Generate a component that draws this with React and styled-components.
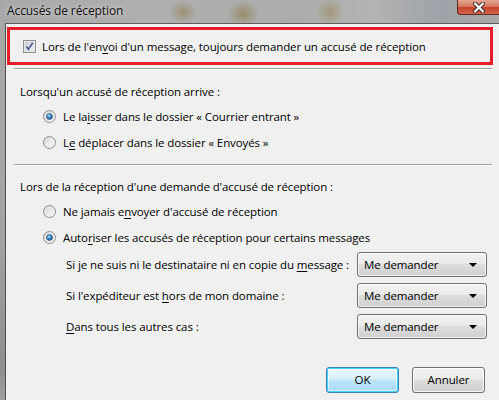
import React from "react";
import styled, { createGlobalStyle } from "styled-components";

const GlobalStyle = createGlobalStyle`
  html, body {
    margin: 0;
    padding: 0;
    background: #a6a6a6;
  }
  body {
    font-family: "Open Sans", "Noto Sans", sans-serif;
    font-size: 11.5px;
    letter-spacing: -0.1px;
    color: #000;
  }
`;

const Window = styled.div`
  width: 499px;
  height: 400px;
  display: flex;
  flex-direction: column;
  overflow: hidden;
  background: linear-gradient(180deg, #a9a9a9 0%, #a2a2a2 60%, #8f8f8f 92%, #a0a0a0 100%);
`;

const TitleBar = styled.div`
  height: 23px;
  flex-shrink: 0;
  display: flex;
  justify-content: space-between;
  align-items: flex-start;
  background:
    radial-gradient(ellipse 14px 12px at 183px 12px, rgba(140, 120, 70, 0.55), transparent),
    radial-gradient(ellipse 16px 14px at 243px 14px, rgba(140, 120, 60, 0.6), transparent),
    radial-gradient(ellipse 14px 14px at 330px 12px, rgba(150, 130, 70, 0.5), transparent),
    linear-gradient(90deg, #a8a8a8 0%, #b0b0b0 30%, #acacac 60%, #b3b3b3 75%, #9ea3a9 88%, #a8a8a8 100%);
`;

const Title = styled.div`
  padding: 2px 0 0 7px;
  line-height: 17px;
  font-size: 12px;
  color: #111;
  text-shadow: 0 0 5px rgba(255, 255, 255, 0.75);
`;

const CloseButton = styled.div`
  width: 42px;
  height: 15px;
  box-sizing: border-box;
  border: 1px solid #5b2a22;
  border-top: none;
  border-right: none;
  border-radius: 0 0 0 4px;
  background: linear-gradient(180deg, #e6a794 0%, #d67a63 45%, #c2412a 55%, #d4674a 100%);
  display: flex;
  align-items: center;
  justify-content: center;
`;

const Client = styled.div`
  flex: 1;
  margin-left: 5px;
  border-left: 1px solid #4e4e4e;
  border-top: 1px solid #5e5e5e;
  background: #f0f0f0;
  display: flex;
  flex-direction: column;
  white-space: nowrap;
`;

const Highlight = styled.div`
  margin: 3px 6px 0 1px;
  height: 38px;
  box-sizing: border-box;
  border: 3px solid #e81d2a;
  padding-left: 13px;
  display: flex;
  align-items: center;
  gap: 6px;
`;

const Separator = styled.div`
  margin: ${(p) => p.$top}px 7px 0 8px;
  height: 1px;
  background: #a0a0a0;
  border-bottom: 1px solid #ffffff;
`;

const Section = styled.div`
  margin-top: ${(p) => p.$top}px;
  display: flex;
  flex-direction: column;
`;

const Label = styled.div`
  height: 24px;
  padding-left: 14px;
  display: flex;
  align-items: center;
`;

const RadioRow = styled.div`
  height: ${(p) => p.$h || 26}px;
  padding-left: 37px;
  display: flex;
  align-items: center;
  gap: 7px;
`;

const Rules = styled.div`
  display: flex;
  flex-direction: column;
  gap: 6px;
  margin-top: 2px;
`;

const RuleRow = styled.div`
  height: 25px;
  padding: 0 12px 0 60px;
  display: flex;
  align-items: center;
  justify-content: space-between;
`;

const Combo = styled.div`
  width: 130px;
  height: 25px;
  box-sizing: border-box;
  border: 1px solid #707070;
  border-radius: 3px;
  background: linear-gradient(180deg, #f2f2f2 0%, #ebebeb 45%, #dddddd 50%, #cfcfcf 100%);
  box-shadow: inset 0 0 0 1px rgba(255, 255, 255, 0.7);
  display: flex;
  align-items: center;
  justify-content: space-between;
  padding: 0 9px 0 6px;
`;

const Arrow = styled.span`
  width: 0;
  height: 0;
  border-left: 4px solid transparent;
  border-right: 4px solid transparent;
  border-top: 4px solid #000;
`;

const Buttons = styled.div`
  margin-top: 28px;
  padding-right: 14px;
  display: flex;
  justify-content: flex-end;
  gap: 13px;
`;

const Button = styled.div`
  width: 73px;
  height: 26px;
  box-sizing: border-box;
  border: 1px solid ${(p) => (p.$default ? "#3c7fb1" : "#707070")};
  border-radius: 3px;
  background: ${(p) =>
    p.$default
      ? "linear-gradient(180deg, #eaf6fd 0%, #d9f0fc 45%, #bee6fd 50%, #a7d9f5 100%)"
      : "linear-gradient(180deg, #f2f2f2 0%, #ebebeb 45%, #dddddd 50%, #cfcfcf 100%)"};
  box-shadow: ${(p) =>
    p.$default ? "inset 0 0 0 1px #48d4fb, inset 0 0 0 2px rgba(255,255,255,0.5)" : "inset 0 0 0 1px rgba(255,255,255,0.8)"};
  display: flex;
  align-items: center;
  justify-content: center;
  padding-bottom: 1px;
`;

const Key = styled.span`
  text-decoration: underline;
  text-underline-offset: 2px;
`;

const Radio = ({ checked }) => (
  <svg width="13" height="13" viewBox="0 0 13 13">
    <defs>
      <linearGradient id="rf" x1="0" y1="0" x2="1" y2="1">
        <stop offset="0" stopColor="#d4d4d4" />
        <stop offset="1" stopColor="#ffffff" />
      </linearGradient>
      <radialGradient id="rd" cx="0.4" cy="0.35" r="0.7">
        <stop offset="0" stopColor="#b8e6fb" />
        <stop offset="0.45" stopColor="#3a8fd0" />
        <stop offset="1" stopColor="#1d4f85" />
      </radialGradient>
    </defs>
    <circle cx="6.5" cy="6.5" r="6" fill="url(#rf)" stroke="#8f8f8f" strokeWidth="1" />
    <circle cx="6.5" cy="6.5" r="4.2" fill="none" stroke="#e9e9e9" strokeWidth="0.8" />
    {checked && <circle cx="6.5" cy="6.5" r="3" fill="url(#rd)" stroke="#264c74" strokeWidth="0.6" />}
  </svg>
);

const Checkbox = () => (
  <svg width="13" height="13" viewBox="0 0 13 13">
    <defs>
      <linearGradient id="cf" x1="0" y1="0" x2="1" y2="1">
        <stop offset="0" stopColor="#cbcfd5" />
        <stop offset="1" stopColor="#f6f6f6" />
      </linearGradient>
    </defs>
    <rect x="0.5" y="0.5" width="12" height="12" fill="#f4f4f4" stroke="#8e8f8f" />
    <rect x="2" y="2" width="9" height="9" fill="url(#cf)" stroke="#c9ccd1" strokeWidth="0.6" />
    <path d="M3.4 6.6 L5.4 9.2 L9.8 2.8" fill="none" stroke="#4a5f97" strokeWidth="1.7" />
  </svg>
);

const CloseGlyph = () => (
  <svg width="14" height="11" viewBox="0 0 14 11">
    <path d="M3 1.5 L11 9.5 M11 1.5 L3 9.5" stroke="#3a2a28" strokeWidth="4" strokeLinecap="round" />
    <path d="M3 1.5 L11 9.5 M11 1.5 L3 9.5" stroke="#ffffff" strokeWidth="2.2" strokeLinecap="round" />
  </svg>
);

const rules = [
  <>Si je ne suis ni le destinataire ni en copie du <Key>m</Key>essage :</>,
  <>Si l'expéditeur est <Key>h</Key>ors de mon domaine :</>,
  <><Key>D</Key>ans tous les autres cas :</>,
];

export default function App() {
  return (
    <Window>
      <GlobalStyle />
      <TitleBar>
        <Title>Accusés de réception</Title>
        <CloseButton>
          <CloseGlyph />
        </CloseButton>
      </TitleBar>
      <Client>
        <Highlight>
          <Checkbox />
          <span>
            Lors de l'en<Key>v</Key>oi d'un message, toujours demander un accusé de réception
          </span>
        </Highlight>
        <Separator $top={3} />

        <Section $top={9}>
          <Label>Lorsqu'un accusé de réception arrive :</Label>
          <RadioRow>
            <Radio checked />
            <span>
              Le la<Key>i</Key>sser dans le dossier « Courrier entrant »
            </span>
          </RadioRow>
          <RadioRow>
            <Radio />
            <span>
              L<Key>e</Key> déplacer dans le dossier « Envoyés »
            </span>
          </RadioRow>
        </Section>
        <Separator $top={9} />

        <Section $top={8}>
          <Label>Lors de la réception d'une demande d'accusé de réception :</Label>
          <RadioRow>
            <Radio />
            <span>
              Ne jamais e<Key>n</Key>voyer d'accusé de réception
            </span>
          </RadioRow>
          <RadioRow>
            <Radio checked />
            <span>
              Auto<Key>r</Key>iser les accusés de réception pour certains messages
            </span>
          </RadioRow>
          <Rules>
            {rules.map((label, i) => (
              <RuleRow key={i}>
                <span>{label}</span>
                <Combo>
                  <span>Me demander</span>
                  <Arrow />
                </Combo>
              </RuleRow>
            ))}
          </Rules>
        </Section>

        <Buttons>
          <Button $default>OK</Button>
          <Button>Annuler</Button>
        </Buttons>
      </Client>
    </Window>
  );
}
